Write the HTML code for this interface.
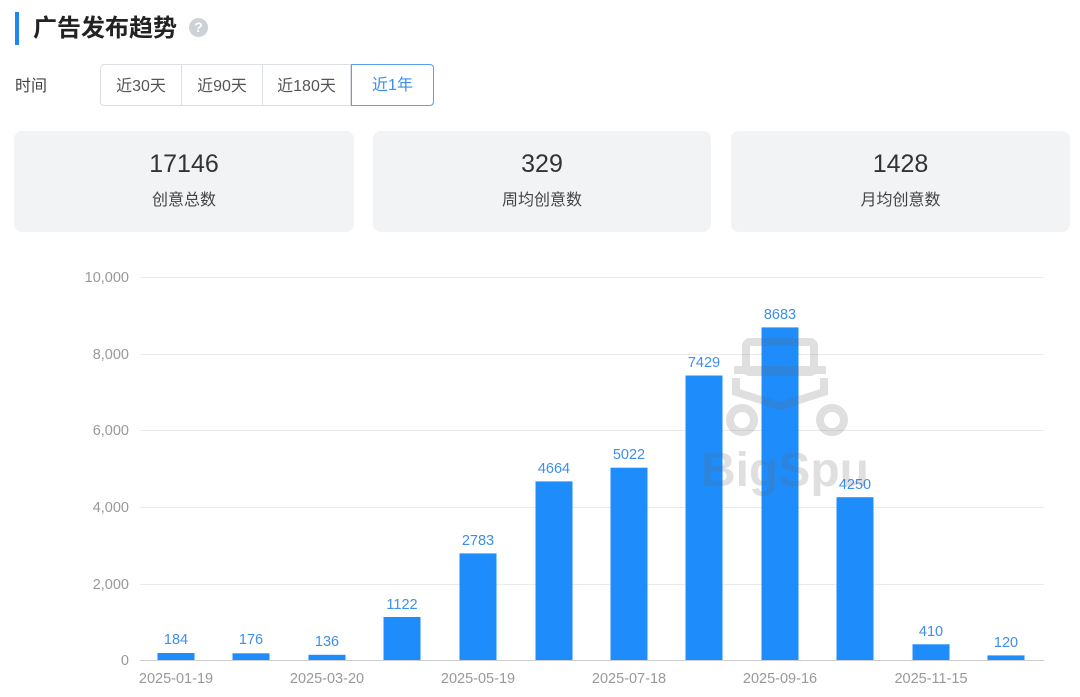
<!DOCTYPE html>
<html><head><meta charset="utf-8"><style>
body{margin:0;width:1080px;height:697px;background:#fff;font-family:"Liberation Sans","Noto Sans CJK SC",sans-serif;position:relative;overflow:hidden}
.bar{position:absolute;left:15px;top:12px;width:4px;height:33px;background:#1e88f0}
.title{position:absolute;left:33px;top:12px;font-size:24px;font-weight:bold;color:#222;line-height:33px}
.q{position:absolute;left:189px;top:18px;width:19px;height:19px;border-radius:50%;background:#cdd1d8;color:#fff;font-size:14px;text-align:center;line-height:19px;font-weight:bold}
.lbl{position:absolute;left:15px;top:76px;font-size:16px;color:#444;line-height:22px}
.tabs{position:absolute;left:100px;top:64px;height:42px;display:flex;border:1px solid #dcdfe6;border-radius:4px;box-sizing:border-box}
.tabs div{font-size:16px;color:#555;line-height:44px;text-align:center;border-right:1px solid #dcdfe6;box-sizing:border-box}
.tabs .on{color:#3b8ef0;border:1px solid #5aa0f0;border-radius:0 4px 4px 0;margin:-1px -1px -1px 0;line-height:42px}
.card{position:absolute;top:131px;height:101px;background:#f2f3f5;border-radius:8px;text-align:center}
.card .n{font-size:25px;color:#333;margin-top:18px;line-height:30px}
.card .t{font-size:16px;color:#444;margin-top:7px}
</style></head><body>
<div class="bar"></div><div class="title">广告发布趋势</div><div class="q">?</div>
<div class="lbl">时间</div>
<div class="tabs"><div style="width:81px">近30天</div><div style="width:81px">近90天</div><div style="width:88px">近180天</div><div class="on" style="width:83px">近1年</div></div>
<div class="card" style="left:14px;width:340px"><div class="n">17146</div><div class="t">创意总数</div></div>
<div class="card" style="left:373px;width:338px"><div class="n">329</div><div class="t">周均创意数</div></div>
<div class="card" style="left:731px;width:339px"><div class="n">1428</div><div class="t">月均创意数</div></div>
<svg width="1080" height="697" style="position:absolute;left:0;top:0" font-family="Liberation Sans, sans-serif">
<g stroke="#eaeaea" stroke-width="1">
<line x1="140" x2="1044" y1="277.5" y2="277.5"/><line x1="140" x2="1044" y1="354.5" y2="354.5"/><line x1="140" x2="1044" y1="430.5" y2="430.5"/><line x1="140" x2="1044" y1="507.5" y2="507.5"/><line x1="140" x2="1044" y1="584.5" y2="584.5"/></g>
<line x1="140" x2="1044" y1="660.5" y2="660.5" stroke="#ccc"/>
<g fill="#999" font-size="14.5" text-anchor="end">
<text x="129" y="282">10,000</text><text x="129" y="359">8,000</text><text x="129" y="435">6,000</text><text x="129" y="512">4,000</text><text x="129" y="589">2,000</text><text x="129" y="665">0</text></g>
<g fill="#999" font-size="14.5" text-anchor="middle">
<text x="176" y="683">2025-01-19</text><text x="327" y="683">2025-03-20</text><text x="478" y="683">2025-05-19</text><text x="629" y="683">2025-07-18</text><text x="780" y="683">2025-09-16</text><text x="931" y="683">2025-11-15</text></g>
<g fill="#1e8cfb">
<rect x="157.5" y="653" width="37" height="7"/><rect x="232.5" y="653.3" width="37" height="6.7"/><rect x="308.5" y="654.8" width="37" height="5.2"/><rect x="383.5" y="617" width="37" height="43"/><rect x="459.5" y="553.4" width="37" height="106.6"/><rect x="535.5" y="481.4" width="37" height="178.6"/><rect x="610.5" y="467.7" width="37" height="192.3"/><rect x="685.5" y="375.5" width="37" height="284.5"/><rect x="761.5" y="327.4" width="37" height="332.6"/><rect x="836.5" y="497.2" width="37" height="162.8"/><rect x="912.5" y="644.3" width="37" height="15.7"/><rect x="987.5" y="655.4" width="37" height="4.6"/></g>
<g fill="#3d8ef0" font-size="14.5" text-anchor="middle">
<text x="176" y="644">184</text><text x="251" y="644">176</text><text x="327" y="646">136</text><text x="402" y="609">1122</text><text x="478" y="545">2783</text><text x="554" y="473">4664</text><text x="629" y="459">5022</text><text x="704" y="367">7429</text><text x="780" y="319">8683</text><text x="855" y="489">4250</text><text x="931" y="636">410</text><text x="1006" y="647">120</text></g>
<g opacity="0.2" fill="none" stroke="#666" stroke-width="8">
<rect x="746" y="342" width="68" height="30" rx="4"/><line x1="734" y1="370" x2="826" y2="370"/>
<path d="M736 378 L736 392 L780 406 L824 392 L824 378"/>
<circle cx="742" cy="420" r="12"/><circle cx="832" cy="420" r="12"/></g>
<text x="785" y="486" text-anchor="middle" font-size="48" font-weight="bold" fill="#666" opacity="0.2">BigSpu</text>
</svg>
</body></html>
